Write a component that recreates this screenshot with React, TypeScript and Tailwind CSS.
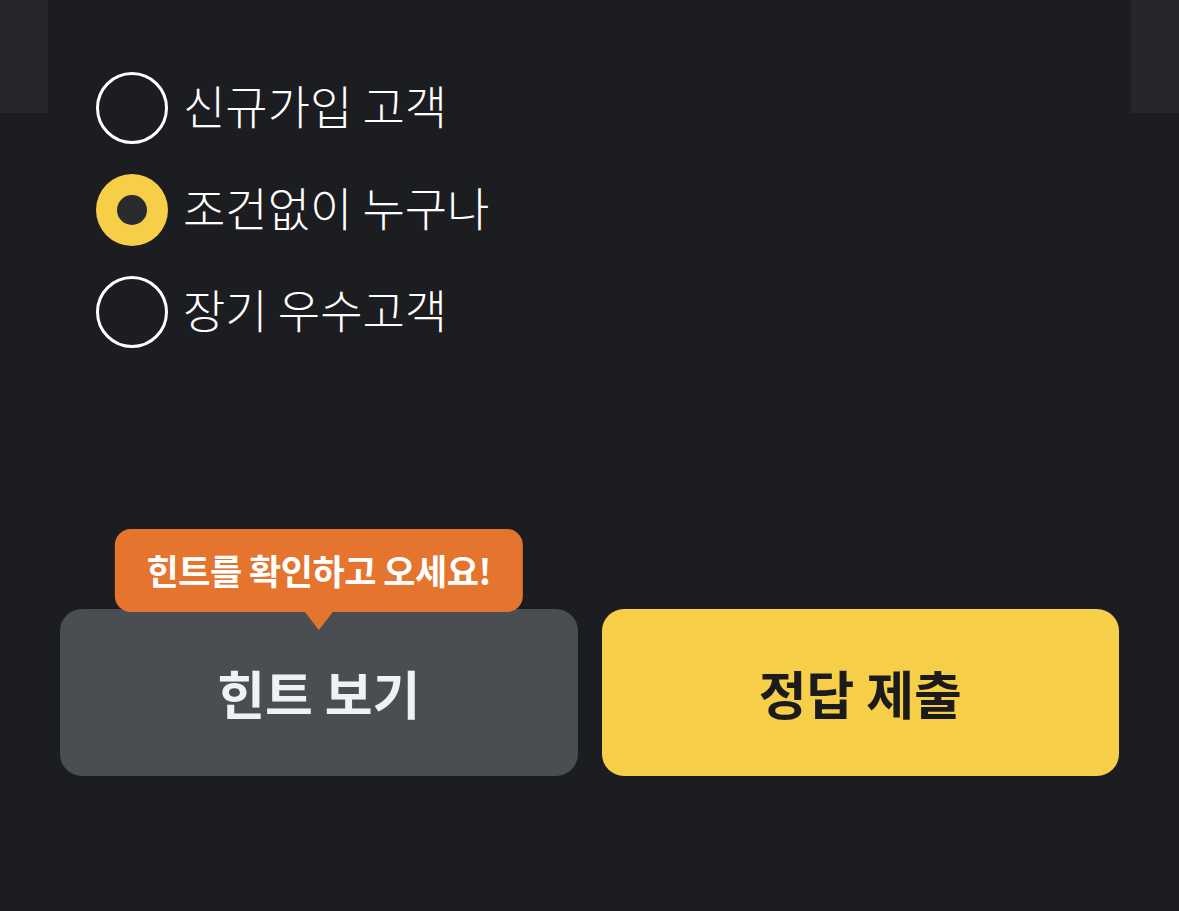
import { useState } from "react"

const options = ["신규가입 고객", "조건없이 누구나", "장기 우수고객"]

const Radio = ({ checked }: { checked: boolean }) =>
  checked ? (
    <span className="w-[72px] h-[72px] rounded-full bg-[#f6ce47] flex items-center justify-center shrink-0">
      <span className="w-[30px] h-[30px] rounded-full bg-[#2a2b2f]" />
    </span>
  ) : (
    <span className="w-[72px] h-[72px] rounded-full border-[3px] border-white shrink-0" />
  )

export default function App() {
  const [selected, setSelected] = useState(1)

  return (
    <div
      className="w-full h-[911px] bg-[#1c1d20] flex items-start overflow-hidden"
      style={{ fontFamily: '"Noto Sans CJK KR", "Noto Sans", sans-serif' }}
    >
      {/* peeking neighbour cards */}
      <div className="w-[48px] h-[113px] bg-[#26272b] shrink-0" />

      <div className="flex-1 flex flex-col">
        {/* options */}
        <div className="pt-[72px] pl-[48px] flex flex-col gap-[30px]">
          {options.map((label, i) => (
            <button
              key={label}
              onClick={() => setSelected(i)}
              className="flex items-center gap-[15px] h-[72px] text-left"
            >
              <Radio checked={selected === i} />
              <span className="text-[46px] leading-none text-white font-light pb-[8px]">{label}</span>
            </button>
          ))}
        </div>

        {/* actions */}
        <div className="mt-[261px] pl-[12px] pr-[12px] flex gap-[24px]">
          <button className="relative flex-1 h-[167px] rounded-[22px] bg-[#4a4d52] text-[#f0f1f5] text-[52px] font-bold">
            힌트 보기
            <span className="absolute left-1/2 -translate-x-1/2 bottom-[calc(100%-3px)] h-[83px] px-[32px] rounded-[16px] bg-[#e5742f] text-white text-[35px] font-bold tracking-[-0.5px] whitespace-nowrap flex items-center">
              힌트를 확인하고 오세요!
              <svg className="absolute left-1/2 -translate-x-1/2 top-full" width="28" height="18" viewBox="0 0 28 18">
                <path d="M0 0 H28 L14 18 Z" fill="#e5742f" />
              </svg>
            </span>
          </button>
          <button className="flex-1 h-[167px] rounded-[22px] bg-[#f6ce47] text-[#1b1b1b] text-[52px] font-bold">
            정답 제출
          </button>
        </div>
      </div>

      <div className="w-[48px] h-[113px] bg-[#26272b] shrink-0" />
    </div>
  )
}
